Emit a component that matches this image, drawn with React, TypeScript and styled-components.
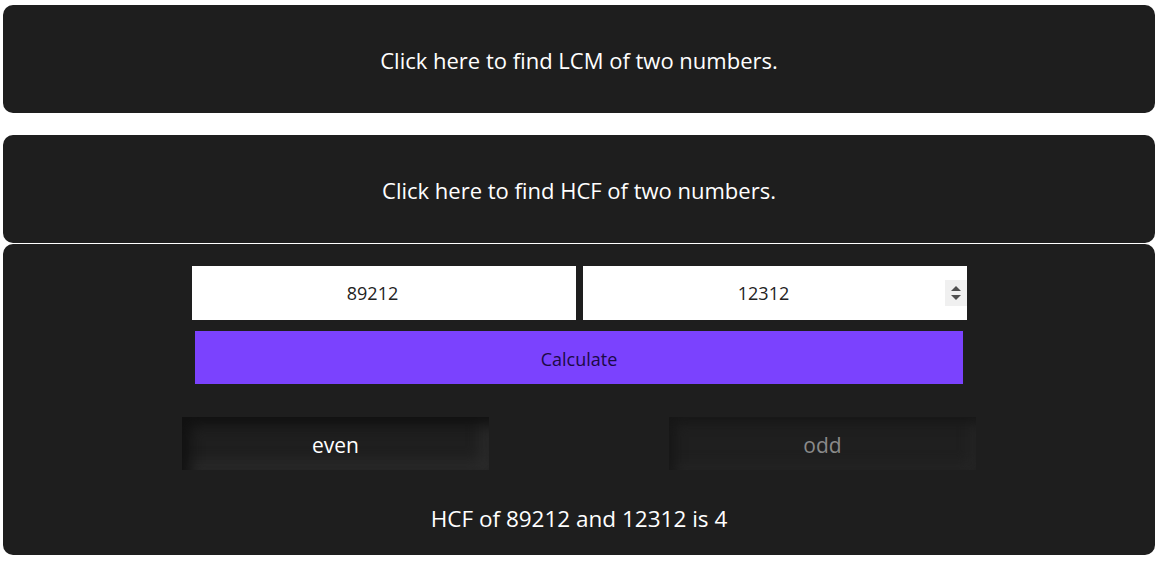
import React from "react";
import styled, { createGlobalStyle } from "styled-components";

const Global = createGlobalStyle`
  html, body { margin: 0; padding: 0; background: #ffffff; }
  body { font-family: "Open Sans", "Noto Sans", sans-serif; }
  * { box-sizing: border-box; }
  input[type=number]::-webkit-inner-spin-button,
  input[type=number]::-webkit-outer-spin-button { -webkit-appearance: none; margin: 0; }
`;

const Page = styled.div`
  padding: 5px 9px 0 3px;
  display: flex;
  flex-direction: column;
`;

const Toggle = styled.div<{ $gap?: number }>`
  background: #1e1e1e;
  color: #ffffff;
  height: 108px;
  padding-top: 2px;
  border-radius: 10px;
  display: flex;
  align-items: center;
  justify-content: center;
  font-size: 22px;
  margin-bottom: ${(p) => p.$gap ?? 0}px;
`;

const Panel = styled.div`
  background: #1e1e1e;
  border-radius: 10px;
  height: 311px;
  display: flex;
  flex-direction: column;
  align-items: center;
  padding-top: 22px;
`;

const InputRow = styled.div`
  display: flex;
  gap: 7px;
`;

const Field = styled.div`
  position: relative;
  width: 384px;
  height: 54px;
`;

const NumInput = styled.input`
  width: 100%;
  height: 100%;
  border: none;
  outline: none;
  background: #fff;
  text-align: center;
  font-family: "Open Sans", sans-serif;
  font-size: 18px;
  color: #222;
  padding: 0 22px 0 0;
  -moz-appearance: textfield;
`;

const Spinner = styled.div`
  position: absolute;
  right: 0;
  top: 14px;
  width: 22px;
  height: 26px;
  background: #f0f0f0;
  display: flex;
  flex-direction: column;
  align-items: center;
  justify-content: center;
  gap: 4px;
`;

const Arrow = styled.div<{ $down?: boolean }>`
  width: 0;
  height: 0;
  border-left: 5px solid transparent;
  border-right: 5px solid transparent;
  ${(p) => (p.$down ? "border-top: 5px solid #505050;" : "border-bottom: 5px solid #505050;")}
`;

const CalcButton = styled.button`
  margin-top: 11px;
  width: 768px;
  height: 53px;
  border: none;
  background: #7b42fe;
  color: #1b0a45;
  font-family: "Open Sans", sans-serif;
  font-size: 18px;
  padding: 2px 0 0;
`;

const ParityRow = styled.div`
  margin-top: 33px;
  display: flex;
  gap: 180px;
`;

const Parity = styled.div<{ $active?: boolean }>`
  width: 307px;
  height: 53px;
  padding-top: 2px;
  display: flex;
  align-items: center;
  justify-content: center;
  font-size: 21px;
  color: ${(p) => (p.$active ? "#ffffff" : "#8a8a8a")};
  background: #1f1f1f;
  box-shadow: ${(p) =>
    p.$active
      ? "inset 8px 8px 14px #111111, inset -8px -8px 14px #2c2c2c"
      : "inset 6px 6px 12px #171717, inset -6px -6px 12px #262626"};
`;

const Result = styled.div`
  margin-top: 33px;
  color: #fff;
  font-size: 22.5px;
`;

export default function App() {
  return (
    <>
      <Global />
      <Page>
        <Toggle $gap={22}>Click here to find LCM of two numbers.</Toggle>
        <Toggle $gap={1}>Click here to find HCF of two numbers.</Toggle>
        <Panel>
          <InputRow>
            <Field>
              <NumInput type="number" defaultValue="89212" />
            </Field>
            <Field>
              <NumInput type="number" defaultValue="12312" />
              <Spinner>
                <Arrow />
                <Arrow $down />
              </Spinner>
            </Field>
          </InputRow>
          <CalcButton>Calculate</CalcButton>
          <ParityRow>
            <Parity $active>even</Parity>
            <Parity>odd</Parity>
          </ParityRow>
          <Result>HCF of 89212 and 12312 is 4</Result>
        </Panel>
      </Page>
    </>
  );
}
